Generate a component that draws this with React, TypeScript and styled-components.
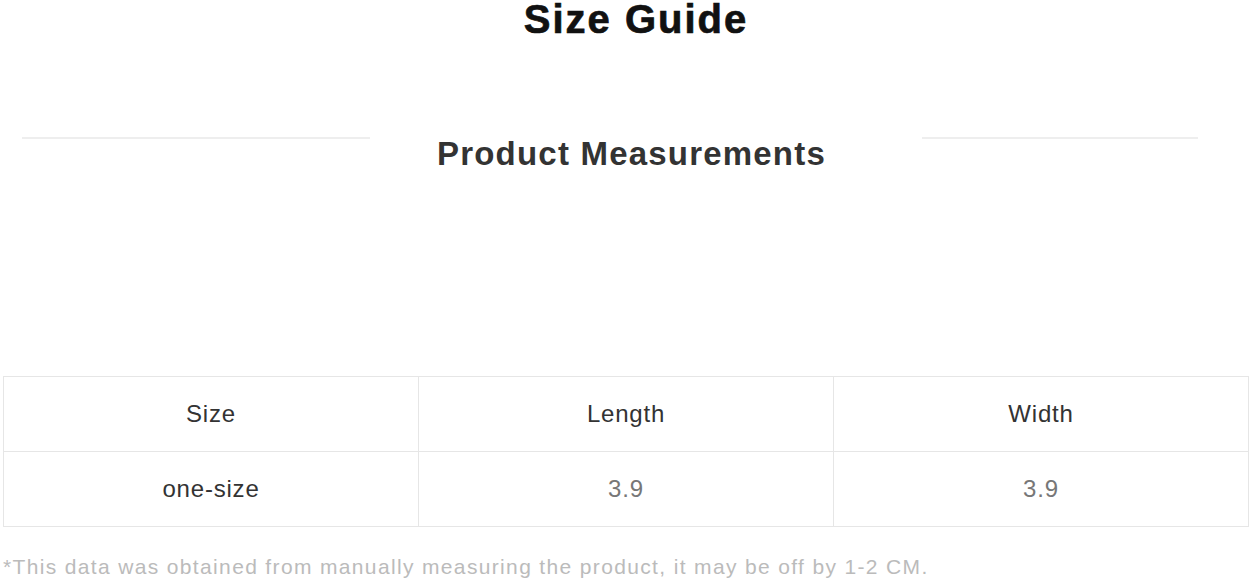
import React from "react";
import styled, { createGlobalStyle } from "styled-components";

const GlobalStyle = createGlobalStyle`
  body {
    margin: 0;
    background: #fff;
    font-family: "Liberation Sans", Arial, sans-serif;
  }
`;

const rows = [{ size: "one-size", length: "3.9", width: "3.9" }];

function App() {
  return (
    <Page>
      <GlobalStyle />
      <Title>Size Guide</Title>
      <SectionHead>
        <Line $width={348} $ml={19} />
        <SectionTitle>Product Measurements</SectionTitle>
        <Line $width={276} $ml={0} />
      </SectionHead>
      <Table>
        <thead>
          <tr>
            <Th>Size</Th>
            <Th>Length</Th>
            <Th>Width</Th>
          </tr>
        </thead>
        <tbody>
          {rows.map((r) => (
            <tr key={r.size}>
              <Td $strong>{r.size}</Td>
              <Td>{r.length}</Td>
              <Td>{r.width}</Td>
            </tr>
          ))}
        </tbody>
      </Table>
      <Note>
        *This data was obtained from manually measuring the product, it may be
        off by 1-2 CM.
      </Note>
    </Page>
  );
}

export default App;

const Page = styled.div`
  width: 1252px;
  height: 583px;
  padding: 0 3px;
  box-sizing: border-box;
  overflow: hidden;
`;

const Title = styled.h1`
  margin: 0;
  padding-left: 20px;
  text-align: center;
  font-size: 40px;
  line-height: 38px;
  font-weight: 700;
  letter-spacing: 2px;
  color: #111;
  -webkit-text-stroke: 0.7px #111;
`;

const SectionHead = styled.div`
  display: flex;
  align-items: flex-start;
  margin-top: 99px;
  height: 239px;
`;

const Line = styled.div<{ $width: number; $ml: number }>`
  width: ${(p) => p.$width}px;
  margin-left: ${(p) => p.$ml}px;
  height: 2px;
  background: #eeeeee;
`;

const SectionTitle = styled.h2`
  margin: 0 96px 0 67px;
  font-size: 33px;
  line-height: 33px;
  font-weight: 700;
  letter-spacing: 1.2px;
  color: #333;
  white-space: nowrap;
`;

const Table = styled.table`
  width: 1246px;
  border-collapse: collapse;
  table-layout: fixed;
`;

const Th = styled.th`
  height: 74px;
  padding: 0;
  border: 1px solid #e6e6e6;
  font-size: 24px;
  font-weight: 400;
  letter-spacing: 0.8px;
  color: #333;
  text-align: center;
  vertical-align: middle;
`;

const Td = styled.td<{ $strong?: boolean }>`
  height: 74px;
  padding: 0;
  border: 1px solid #e6e6e6;
  font-size: 24px;
  letter-spacing: 0.8px;
  color: ${(p) => (p.$strong ? "#333" : "#777")};
  text-align: center;
  vertical-align: middle;
`;

const Note = styled.p`
  margin: 28px 0 0;
  font-size: 21px;
  line-height: 24px;
  letter-spacing: 1.35px;
  color: #bbb;
  white-space: nowrap;
`;
